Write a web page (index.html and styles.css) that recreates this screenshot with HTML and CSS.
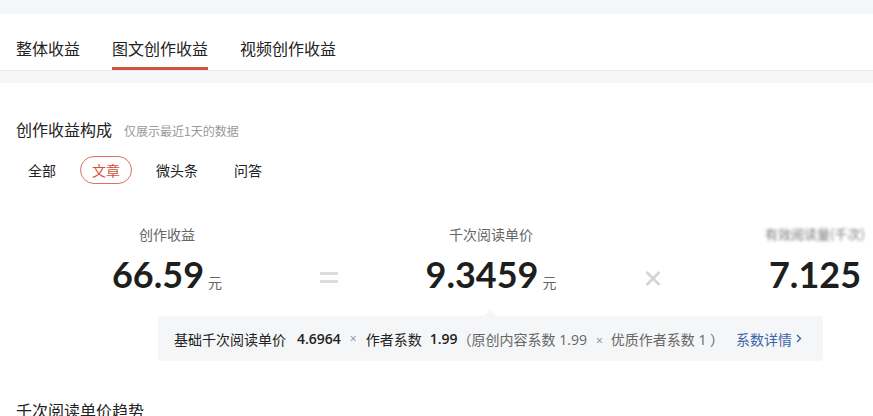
FILE: index.html
```html
<!DOCTYPE html>
<html lang="zh-CN">
<head>
<meta charset="utf-8">
<title>图文创作收益</title>
<link rel="stylesheet" href="styles.css">
</head>
<body>
<div class="top-strip"></div>
<nav class="tabs">
  <div class="tab">整体收益</div>
  <div class="tab active">图文创作收益</div>
  <div class="tab">视频创作收益</div>
</nav>
<div class="band"></div>
<main class="content">
  <div class="sec-head">
    <h2 class="sec-title">创作收益构成</h2>
    <span class="sec-sub">仅展示最近1天的数据</span>
  </div>
  <div class="pills">
    <span class="pill">全部</span>
    <span class="pill active">文章</span>
    <span class="pill">微头条</span>
    <span class="pill">问答</span>
  </div>
  <div class="metrics">
    <div class="metric">
      <div class="m-label">创作收益</div>
      <div class="m-value"><span class="num">66.59</span><span class="unit">元</span></div>
    </div>
    <div class="op">
      <svg class="op-eq" width="18" height="11" viewBox="0 0 18 11"><rect x="0" y="0" width="18" height="3" fill="#dcdcdc"/><rect x="0" y="8" width="18" height="3" fill="#dcdcdc"/></svg>
    </div>
    <div class="metric">
      <div class="m-label">千次阅读单价</div>
      <div class="m-value"><span class="num">9.3459</span><span class="unit">元</span></div>
    </div>
    <div class="op">
      <svg class="op-x" width="16" height="15" viewBox="0 0 16 15"><path d="M1.5 1 L14.5 14 M14.5 1 L1.5 14" stroke="#d4d4d4" stroke-width="2.6" fill="none"/></svg>
    </div>
    <div class="metric">
      <div class="m-label blurred">有效阅读量(千次)</div>
      <div class="m-value"><span class="num">7.125</span></div>
    </div>
  </div>
  <div class="formula">
    <span class="f-label">基础千次阅读单价</span>
    <span class="f-val">4.6964</span>
    <span class="f-times">×</span>
    <span class="f-label">作者系数</span>
    <span class="f-val f-val-sm">1.99</span>
    <span class="f-detail">（原创内容系数 1.99<span class="f-times">×</span>优质作者系数 1 ）</span>
    <a class="f-link">系数详情 <svg width="6" height="9" viewBox="0 0 6 9"><path d="M1 1 L4.5 4.5 L1 8" stroke="#3c64a6" stroke-width="1.4" fill="none"/></svg></a>
  </div>
  <h2 class="sec-title trend">千次阅读单价趋势</h2>
</main>
</body>
</html>
```

FILE: styles.css
```css
html, body {
  margin: 0;
  padding: 0;
  overflow: hidden;
  background: #fff;
}
body {
  font-family: "Noto Sans CJK SC", "Noto Sans", sans-serif;
  color: #222;
}
.top-strip {
  height: 14px;
  background: #f5f6f7;
}
.tabs {
  display: flex;
  gap: 32px;
  padding: 0 16px;
  height: 56px;
  border-bottom: 1px solid #e8e8e8;
}
.tab {
  box-sizing: border-box;
  height: 56px;
  padding-top: 22px;
  font-size: 16px;
  line-height: 24px;
  color: #222;
  border-bottom: 3px solid transparent;
}
.tab.active {
  border-bottom-color: #d4513d;
}
.band {
  height: 12px;
  background: #f5f6f7;
}
.content {
  padding: 0 16px;
  overflow: hidden;
}
.sec-head {
  display: flex;
  align-items: baseline;
  gap: 12px;
  margin-top: 34px;
}
.sec-title {
  margin: 0;
  font-size: 16px;
  line-height: 24px;
  font-weight: 400;
  color: #222;
}
.sec-sub {
  font-size: 12px;
  color: #999;
}
.pills {
  display: flex;
  gap: 12px;
  margin-top: 15px;
}
.pill {
  box-sizing: border-box;
  height: 28px;
  line-height: 26px;
  padding: 0 11px;
  border: 1px solid transparent;
  border-radius: 14px;
  font-size: 14px;
  color: #222;
}
.pill.active {
  border-color: #e0705f;
  color: #d4513d;
}
.metrics {
  display: grid;
  grid-template-columns: repeat(5, 162px);
  margin-top: 40px;
  margin-left: 70px;
  width: 810px;
}
.metric {
  display: flex;
  flex-direction: column;
  align-items: center;
}
.m-label {
  font-size: 14px;
  line-height: 20px;
  color: #666;
  white-space: nowrap;
}
.m-label.blurred {
  filter: blur(1.4px);
  color: #777;
  font-size: 13px;
}
.m-value {
  margin-top: 8px;
  display: flex;
  align-items: baseline;
  white-space: nowrap;
}
.num {
  font-family: Lato, "Noto Sans", sans-serif;
  font-weight: 700;
  font-size: 36px;
  line-height: 44px;
  color: #1e1e1e;
}
.unit {
  margin-left: 4px;
  font-size: 14px;
  color: #666;
}
.op {
  display: flex;
  justify-content: center;
}
.op-eq {
  margin-top: 48px;
}
.op-x {
  margin-top: 47px;
}
.formula {
  position: relative;
  box-sizing: border-box;
  margin-top: 20px;
  margin-left: 142px;
  width: 665px;
  height: 45px;
  padding: 0 16px;
  background: #f5f6f7;
  border-radius: 4px;
  display: flex;
  align-items: center;
  font-size: 14px;
  white-space: nowrap;
}
.formula::before {
  content: "";
  position: absolute;
  top: -6px;
  left: 326px;
  border-left: 6px solid transparent;
  border-right: 6px solid transparent;
  border-bottom: 6px solid #f5f6f7;
}
.f-label {
  color: #222;
}
.f-val {
  font-family: "Open Sans", "Noto Sans", sans-serif;
  font-weight: 600;
  color: #222;
  margin-left: 11px;
}
.f-val-sm {
  margin-left: 8px;
}
.f-times {
  font-family: "Open Sans", sans-serif;
  color: #888;
  font-size: 12px;
  margin: 0 9px;
}
.f-detail {
  color: #666;
  font-family: "Open Sans", "Noto Sans CJK SC", sans-serif;
}
.f-detail .f-times {
  margin: 0 8px 0 9px;
}
.f-link {
  margin-left: 12px;
  color: #3c64a6;
  display: flex;
  align-items: center;
  gap: 4px;
}
.trend {
  margin-top: 37px;
}
```
